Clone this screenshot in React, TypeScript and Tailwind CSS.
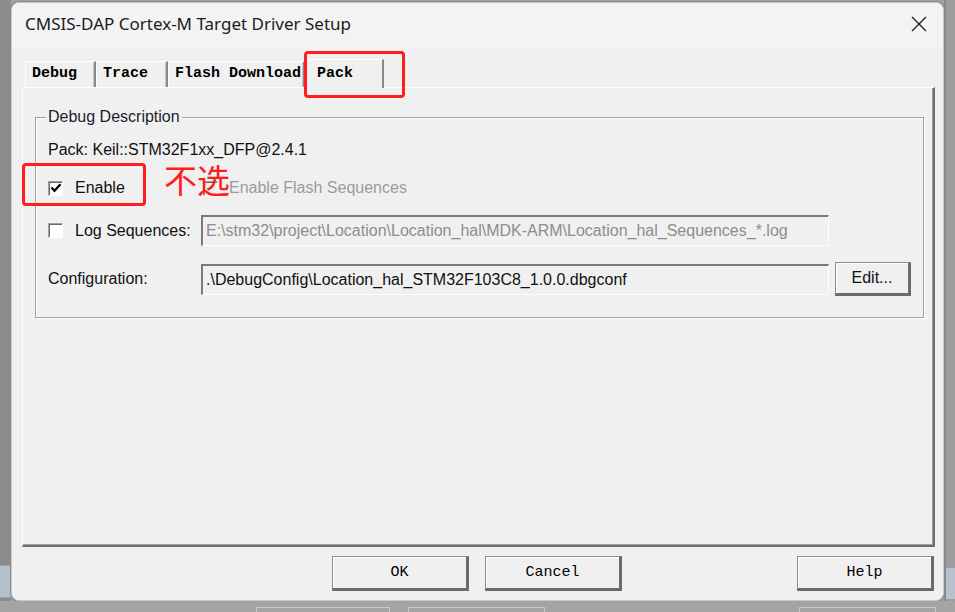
import React from "react";

const ui = "font-['Liberation_Sans',Arial,sans-serif]";
const mono = "font-['Liberation_Mono','Courier_New',monospace]";

const Check = ({ checked, disabled }: { checked?: boolean; disabled?: boolean }) => (
    <div
        className={`w-[15px] h-[15px] shrink-0 border-t border-l border-t-[#a0a0a0] border-l-[#a0a0a0] border-b border-r border-b-white border-r-white ${disabled ? "bg-[#f0f0f0]" : "bg-white"} shadow-[inset_1px_1px_0_#696969] flex items-center justify-center`}
    >
        {checked && (
            <svg width="12" height="12" viewBox="0 0 12 12">
                <path d="M1.5 5.5 L4.5 8.8 L10.5 2.2" stroke="#000" strokeWidth="2.3" fill="none" />
            </svg>
        )}
    </div>
);

const Field = ({ text, dim }: { text: string; dim?: boolean }) => (
    <div
        className={`w-[628px] h-[31px] bg-[#f0f0f0] border-t-2 border-l-2 border-t-[#7a7a7a] border-l-[#7a7a7a] border-b border-r border-b-white border-r-white flex items-center pl-[3px] text-[16px] ${dim ? "text-[#8d8d8d]" : "text-[#111]"} whitespace-nowrap overflow-hidden`}
    >
        {text}
    </div>
);

const WinButton = ({ label, className = "" }: { label: string; className?: string }) => (
    <button
        className={`w-[137px] h-[35px] bg-[#f0f0f0] border border-[#8a8a8a] border-b-[3px] border-r-[3px] border-b-[#6b6b6b] border-r-[#6b6b6b] shadow-[inset_1px_1px_0_#fff] flex items-center justify-center pt-[1px] ${mono} text-[15px] text-black ${className}`}
    >
        {label}
    </button>
);

const Tab = ({ label, w }: { label: string; w: string }) => (
    <div
        className={`${w} h-[26px] border-t border-l border-white border-r-2 border-r-[#8a8a8a] shadow-[inset_-1px_0_0_#c8c8c8] flex items-center pl-[6px] ${mono} font-bold text-[15px] text-black whitespace-nowrap overflow-hidden`}
    >
        {label}
    </div>
);

export default function App() {
    return (
        <div className="w-[955px] h-[612px] bg-[#a2a2a2] flex flex-col overflow-hidden relative">
            <div className="flex h-[601px]">
                {/* desktop edge, left */}
                <div className="w-[11px] flex flex-col bg-[#8c8c8c]">
                    <div className="flex-1" />
                    <div className="h-[33px] bg-[#b4c0cd] mb-[3px] border-y border-[#9aa3ad]" />
                </div>

                {/* dialog window */}
                <div className="w-[933px] mt-[2px] h-[599px] bg-[#f0f0f0] rounded-[8px] border border-[#c9c9c9] shadow-[0_0_0_1px_#8a8a8a] flex flex-col overflow-hidden">
                    <div className={`h-[46px] shrink-0 bg-[#f3f3f3] flex items-center justify-between pl-[13px] pr-[16px] pb-[4px] font-['Noto_Sans','Open_Sans',sans-serif] text-[17px] text-[#1b1b1b]`}>
                        <span>CMSIS-DAP Cortex-M Target Driver Setup</span>
                        <svg width="16" height="16" viewBox="0 0 16 16">
                            <path d="M1 1 L15 15 M15 1 L1 15" stroke="#1b1b1b" strokeWidth="1.3" />
                        </svg>
                    </div>

                    {/* tabs */}
                    <div className="flex items-end pt-[8px] pl-[13px] h-[38px] shrink-0">
                        <Tab label="Debug" w="w-[71px]" />
                        <Tab label="Trace" w="w-[72px]" />
                        <Tab label="Flash Download" w="w-[137px]" />
                        <div className={`w-[80px] h-[29px] -ml-[1px] -mb-[1px] relative z-10 bg-[#f0f0f0] border-t border-l border-white border-r-2 border-r-[#8a8a8a] flex items-start pt-[3px] pl-[12px] ${mono} font-bold text-[15px] text-black`}>
                            Pack
                        </div>
                    </div>

                    {/* tab page */}
                    <div className="ml-[10px] w-[913px] h-[460px] shrink-0 border-t border-l border-white border-r-2 border-b-2 border-r-[#6e6e6e] border-b-[#6e6e6e] shadow-[inset_0_-1px_0_#a0a0a0,inset_-1px_0_0_#a0a0a0] pt-[20px] pl-[12px] pr-[9px]">
                        <fieldset className={`border border-[#a0a0a0] shadow-[inset_1px_1px_0_#fff,1px_1px_0_#fff] h-[210px] pl-[12px] pr-[12px] ${ui} text-[16px] text-[#111]`}>
                            <legend className="-ml-[2px] px-[2px] leading-[18px] text-[#1c1c2c]">Debug Description</legend>
                            <div className="h-[20px] mt-[14px] flex items-center">Pack: Keil::STM32F1xx_DFP@2.4.1</div>

                            <div className="h-[20px] mt-[18px] flex items-center">
                                <div className="w-[155px] flex items-center gap-[12px]">
                                    <Check checked />
                                    <span>Enable</span>
                                </div>
                                <div className="flex items-center gap-[11px] text-[#9b9b9b]">
                                    <Check disabled />
                                    <span>Enable Flash Sequences</span>
                                </div>
                            </div>

                            <div className="mt-[17px] flex items-center">
                                <div className="w-[153px] flex items-center gap-[12px]">
                                    <Check />
                                    <span>Log Sequences:</span>
                                </div>
                                <Field dim text="E:\stm32\project\Location\Location_hal\MDK-ARM\Location_hal_Sequences_*.log" />
                            </div>

                            <div className="mt-[16px] flex items-center">
                                <div className="w-[153px]">Configuration:</div>
                                <Field text=".\DebugConfig\Location_hal_STM32F103C8_1.0.0.dbgconf" />
                                <button className="ml-[6px] w-[76px] h-[34px] bg-[#f0f0f0] border border-[#8a8a8a] border-b-[3px] border-r-[3px] border-b-[#6b6b6b] border-r-[#6b6b6b] shadow-[inset_1px_1px_0_#fff] flex items-center justify-center text-[16px]">
                                    Edit...
                                </button>
                            </div>
                        </fieldset>
                    </div>

                    {/* dialog buttons */}
                    <div className="flex items-start mt-[9px]">
                        <WinButton label="OK" className="ml-[320px]" />
                        <WinButton label="Cancel" className="ml-[16px]" />
                        <div className="flex-1" />
                        <WinButton label="Help" className="mr-[9px]" />
                    </div>
                </div>

                {/* desktop edge, right */}
                <div className="w-[11px] flex flex-col bg-[#9d9d9d] border-l-2 border-[#8a8a8a]">
                    <div className="flex-1" />
                    <div className="h-[31px] bg-[#b6c2cf] mb-[2px]" />
                </div>
            </div>
            <div className="h-[11px] bg-[#a4a4a4] flex items-start pt-[6px] pl-[256px] gap-[18px]">
                <div className="w-[134px] h-[5px] border-t border-x border-[#c8c8c8]" />
                <div className="w-[137px] h-[5px] border-t border-x border-[#c8c8c8]" />
                <div className="w-[137px] h-[5px] ml-[236px] border-t border-x border-[#c8c8c8]" />
            </div>

            {/* red annotations */}
            <div className="absolute left-[304px] top-[51px] w-[101px] h-[47px] border-[3px] border-[#ff1d1d] rounded-[4px] z-20" />
            <div className="absolute left-[22px] top-[163px] w-[124px] h-[43px] border-[3px] border-[#ff1d1d] rounded-[4px] z-20" />
            <div className="absolute left-[164px] top-[158px] z-20 text-[33px] leading-[42px] text-[#ff1d1d] font-['Noto_Sans_CJK_SC',sans-serif]">不选</div>
        </div>
    );
}
